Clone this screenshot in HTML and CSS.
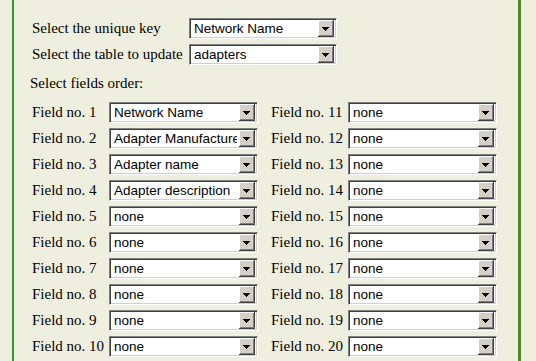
FILE: index.html
```html
<!DOCTYPE html>
<html lang="en">
<head>
    <meta charset="UTF-8">
    <meta name="viewport" content="width=device-width, initial-scale=1.0">
    <title>Update table</title>
    <link rel="stylesheet" href="styles.css">
</head>
<body>
    <div class="panel">
        <!-- key and table -->
        <div class="setup">
            <label for="key">Select the unique key</label>
            <select id="key" class="combo">
                <option>Network Name</option>
                <option>Adapter name</option>
            </select>
            <label for="table">Select the table to update</label>
            <select id="table" class="combo">
                <option>adapters</option>
                <option>networks</option>
            </select>
        </div>

        <p class="caption">Select fields order:</p>

        <!-- field order, filled in below -->
        <div id="fields" class="fields"></div>
    </div>

    <script>
        const columns = ['none', 'Network Name', 'Adapter Manufacturer', 'Adapter name', 'Adapter description'];
        const chosen = ['Network Name', 'Adapter Manufacturer', 'Adapter name', 'Adapter description'];
        const fields = document.getElementById('fields');

        // rows hold field n and field n + 10 side by side
        for (let row = 1; row <= 10; row++) {
            [row, row + 10].forEach(function(n) {
                const label = document.createElement('label');
                label.htmlFor = 'field' + n;
                label.textContent = 'Field no. ' + n;

                const select = document.createElement('select');
                select.id = 'field' + n;
                select.className = 'combo';
                columns.forEach(function(name) {
                    const opt = document.createElement('option');
                    opt.textContent = name;
                    select.appendChild(opt);
                });
                select.value = chosen[n - 1] || 'none';

                fields.appendChild(label);
                fields.appendChild(select);
            });
        }
    </script>
</body>
</html>
```

FILE: styles.css
```css
body {
    margin: 0;
    background-color: #efefdf;
    font-family: "Liberation Serif", "Times New Roman", serif;
    font-size: 15px;
    color: #000;
}
.panel {
    margin-left: 12px;
    width: 509px;
    height: 361px;
    box-sizing: border-box;
    border-left: 2px solid #339933;
    border-right: 3px solid #4b8a22;
    padding: 18px 0 0 18px;
    overflow: hidden;
}
label {
    line-height: 21px;
    white-space: nowrap;
}
.setup {
    display: grid;
    grid-template-columns: 157px 148px;
    row-gap: 5px;
}
.caption {
    margin: 8px 0 8px -2px;
    line-height: 21px;
}
.fields {
    display: grid;
    grid-template-columns: 77px 162px 77px 149px;
    row-gap: 5px;
}
.combo {
    appearance: none;
    -webkit-appearance: none;
    width: 149px;
    height: 21px;
    margin: 0;
    padding: 0 20px 0 4px;
    border: 1px solid;
    border-color: #808080 #ffffff #ffffff #808080;
    border-radius: 0;
    box-shadow: inset 1px 1px 0 #404040, inset -1px -1px 0 #d4d0c8;
    background-color: #fff;
    background-image: url("data:image/svg+xml,%3Csvg xmlns='http://www.w3.org/2000/svg' width='16' height='17' shape-rendering='crispEdges'%3E%3Crect width='16' height='17' fill='%23d4d0c8'/%3E%3Cpath d='M0 0H15V1H1V16H0Z' fill='%23fff'/%3E%3Cpath d='M15 0H16V17H0V16H15Z' fill='%23404040'/%3E%3Cpath d='M14 1H15V16H1V15H14Z' fill='%23808080'/%3E%3Cpath d='M4 7H11V8H10V9H9V10H8V11H7V10H6V9H5V8H4Z' fill='%23000'/%3E%3C/svg%3E");
    background-repeat: no-repeat;
    background-position: right 2px center;
    font-family: "Liberation Sans", Arial, sans-serif;
    font-size: 13.5px;
    color: #000;
    outline: none;
}
.setup .combo {
    width: 148px;
}
```
